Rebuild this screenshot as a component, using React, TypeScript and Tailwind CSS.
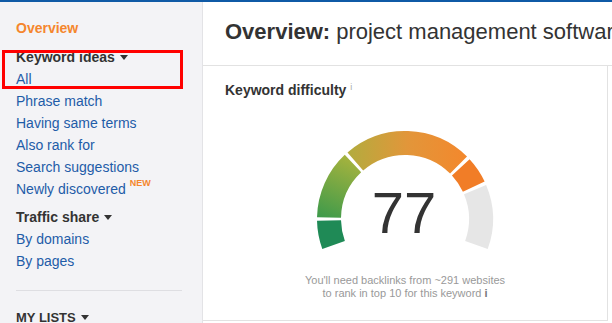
import React from 'react';

// ── Helpers ───────────────────────────────────────────────────────────────────

const CX = 100;
const CY = 92;
const R = 76;

const pt = (deg: number) => {
  const a = (deg * Math.PI) / 180;
  return [CX + R * Math.sin(a), CY - R * Math.cos(a)];
};

const arc = (from: number, to: number) => {
  const [x0, y0] = pt(from);
  const [x1, y1] = pt(to);
  const large = to - from > 180 ? 1 : 0;
  return `M ${x0} ${y0} A ${R} ${R} 0 ${large} 1 ${x1} ${y1}`;
};

const Caret = () => (
  <svg width="8" height="5" viewBox="0 0 8 5" className="inline-block ml-[5px] mb-[2px]">
    <path d="M0 0 L8 0 L4 5 Z" fill="#333" />
  </svg>
);

// ── Sidebar ───────────────────────────────────────────────────────────────────

const links1 = ['Phrase match', 'Having same terms', 'Also rank for', 'Search suggestions'];

const Sidebar = () => (
  <div className="w-[203px] shrink-0 bg-[#f3f3f6] border-r border-[#e3e3e6] pl-4 pr-5 pt-[15px] text-[14px] leading-[22px]">
    <div className="font-bold text-[#f5862d]">Overview</div>

    <div className="mt-[7px] font-bold text-[#333]">
      Keyword ideas
      <Caret />
    </div>
    <div className="text-[#1e5ca8]">All</div>
    {links1.map((l) => (
      <div key={l} className="text-[#1e5ca8]">{l}</div>
    ))}
    <div className="text-[#1e5ca8]">
      Newly discovered
      <span className="relative -top-[8px] ml-[4px] text-[9px] font-bold text-[#f5862d]">NEW</span>
    </div>

    <div className="mt-[4px] font-bold text-[#333]">
      Traffic share
      <Caret />
    </div>
    <div className="text-[#1e5ca8]">By domains</div>
    <div className="text-[#1e5ca8]">By pages</div>

    <div className="mt-[18px] h-px bg-[#dedee2]" />
    <div className="mt-[16px] text-[13px] font-bold text-[#333]">
      MY LISTS
      <Caret />
    </div>
  </div>
);

// ── Gauge ─────────────────────────────────────────────────────────────────────

const Gauge = () => (
  <svg width="200" height="130" viewBox="0 0 200 130" className="mx-auto block">
    <defs>
      <linearGradient id="g2" gradientUnits="userSpaceOnUse" x1="24" y1="95" x2="50" y2="35">
        <stop offset="0" stopColor="#3d9a4b" />
        <stop offset="1" stopColor="#a2b23e" />
      </linearGradient>
      <linearGradient id="g3" gradientUnits="userSpaceOnUse" x1="45" y1="0" x2="160" y2="0">
        <stop offset="0" stopColor="#b4ab3e" />
        <stop offset="0.5" stopColor="#e2963a" />
        <stop offset="1" stopColor="#f3882d" />
      </linearGradient>
    </defs>
    <g fill="none" strokeWidth="24">
      <path d={arc(-110, -91.2)} stroke="#1f8a56" />
      <path d={arc(-88.8, -43.2)} stroke="url(#g2)" />
      <path d={arc(-40.8, 44.8)} stroke="url(#g3)" />
      <path d={arc(47.2, 64.8)} stroke="#f17d27" />
      <path d={arc(67.2, 110)} stroke="#e6e6e6" />
    </g>
    <text
      x={CX - 1}
      y="106"
      textAnchor="middle"
      fontSize="58"
      fill="#333"
      fontFamily="'Liberation Sans', Arial, sans-serif"
    >
      77
    </text>
  </svg>
);

// ── App ───────────────────────────────────────────────────────────────────────

export default function App() {
  return (
    <div className="relative w-[612px] h-[323px] overflow-hidden bg-white font-['Liberation_Sans',Arial,sans-serif]">
      <div className="h-[2px] bg-[#0f5aa6]" />

      <div className="flex h-[321px]">
        <Sidebar />

        {/* Main */}
        <div className="flex-1 min-w-0 flex flex-col">
          <div className="h-[64px] shrink-0 border-b border-[#e2e2e2] flex items-center pl-[22px] pb-[4px] whitespace-nowrap overflow-hidden text-[22px] text-[#333]">
            <span className="font-bold">Overview:</span>
            <span className="ml-[6px]">project management software</span>
          </div>

          <div className="w-[405px] h-[255px] border-r border-b border-[#e2e2e2]">
            <div className="pl-[22px] pt-[15px] text-[14px] leading-[18px] font-bold text-[#333]">
              Keyword difficulty
              <span className="relative -top-[5px] ml-[4px] text-[9px] font-normal text-[#aaa]">i</span>
            </div>

            <div className="mt-[26px]">
              <Gauge />
            </div>

            <div className="mt-[17px] text-center text-[11px] leading-[13px] text-[#999]">
              <div>You'll need backlinks from ~291 websites</div>
              <div>
                to rank in top 10 for this keyword
                <span className="ml-[3px] font-bold text-[#777]">i</span>
              </div>
            </div>
          </div>
        </div>
      </div>

      {/* Highlight box */}
      <div className="absolute left-[2px] top-[50px] w-[181px] h-[39px] border-[3px] border-[#ff0000]" />
    </div>
  );
}
